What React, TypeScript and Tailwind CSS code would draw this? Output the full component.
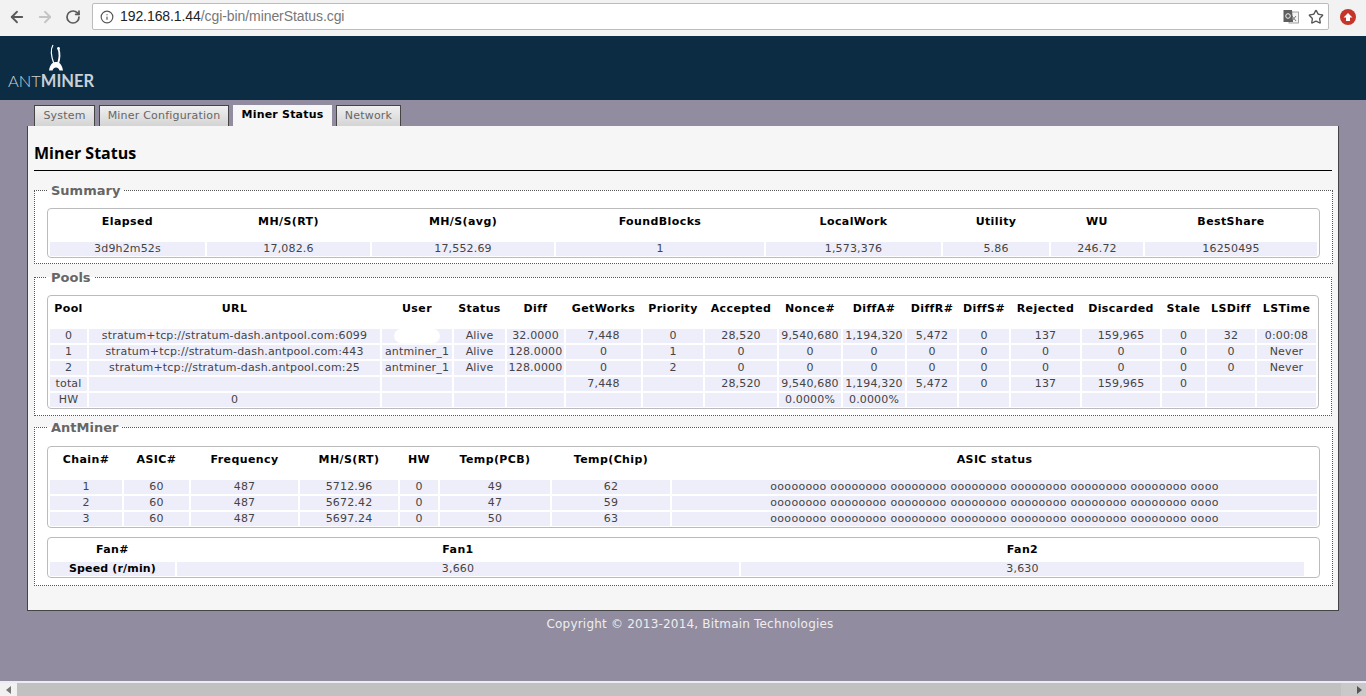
import { ArrowLeft, ArrowRight, Info, RotateCw, Star } from "lucide-react";
import type { ReactNode } from "react";

const summaryHead = ["Elapsed", "MH/S(RT)", "MH/S(avg)", "FoundBlocks", "LocalWork", "Utility", "WU", "BestShare"];
const summaryRows = [["3d9h2m52s", "17,082.6", "17,552.69", "1", "1,573,376", "5.86", "246.72", "16250495"]];

const poolHead = ["Pool", "URL", "User", "Status", "Diff", "GetWorks", "Priority", "Accepted", "Nonce#", "DiffA#", "DiffR#", "DiffS#", "Rejected", "Discarded", "Stale", "LSDiff", "LSTime"];
const poolRows = [
  ["0", "stratum+tcp://stratum-dash.antpool.com:6099", "@hidden", "Alive", "32.0000", "7,448", "0", "28,520", "9,540,680", "1,194,320", "5,472", "0", "137", "159,965", "0", "32", "0:00:08"],
  ["1", "stratum+tcp://stratum-dash.antpool.com:443", "antminer_1", "Alive", "128.0000", "0", "1", "0", "0", "0", "0", "0", "0", "0", "0", "0", "Never"],
  ["2", "stratum+tcp://stratum-dash.antpool.com:25", "antminer_1", "Alive", "128.0000", "0", "2", "0", "0", "0", "0", "0", "0", "0", "0", "0", "Never"],
  ["total", "", "", "", "", "7,448", "", "28,520", "9,540,680", "1,194,320", "5,472", "0", "137", "159,965", "0", "", ""],
  ["HW", "0", "", "", "", "", "", "", "0.0000%", "0.0000%", "", "", "", "", "", "", ""],
];

const chainHead = ["Chain#", "ASIC#", "Frequency", "MH/S(RT)", "HW", "Temp(PCB)", "Temp(Chip)", "ASIC status"];
const asic = "oooooooo oooooooo oooooooo oooooooo oooooooo oooooooo oooooooo oooo";
const chainRows = [
  ["1", "60", "487", "5712.96", "0", "49", "62", asic],
  ["2", "60", "487", "5672.42", "0", "47", "59", asic],
  ["3", "60", "487", "5697.24", "0", "50", "63", asic],
];

function DataTable({ cols, head, rows, headClass = "h-[28px] leading-[20px]", className = "", boldFirst = false }: {
  cols: string;
  head: string[];
  rows: string[][];
  headClass?: string;
  className?: string;
  boldFirst?: boolean;
}) {
  return (
    <div className={`rounded-[4px] border border-[#bbbbbb] bg-white px-[2px] pb-[1px] pt-[3px] ${className}`}>
      <div className={`grid gap-[2px] ${cols}`}>
        {head.map((h) => (
          <div key={h} className={`text-center font-bold tracking-[0.4px] text-black ${headClass}`}>{h}</div>
        ))}
        {rows.map((row, i) =>
          row.map((cell, j) => (
            <div
              key={`${i}-${j}`}
              className={`flex h-[14px] items-center justify-center whitespace-nowrap bg-[#eeeefb] leading-[14px] ${cell === asic ? "tracking-[0.3px]" : "tracking-[0.16px]"} ${boldFirst && j === 0 ? "font-bold tracking-[0.4px] text-black" : ""}`}
            >
              {cell === "@hidden" ? <span className="h-[14px] w-[46px] rounded-full bg-white" /> : cell}
            </div>
          ))
        )}
      </div>
    </div>
  );
}

function Box({ title, className = "", children }: { title: string; className?: string; children: ReactNode }) {
  return (
    <fieldset className={`border border-dotted border-[#555555] bg-white px-[12px] pb-[5px] pt-[10px] ${className}`}>
      <legend className="px-[4px] pt-[2px] text-[13px] font-bold leading-[14px] text-[#666666]">{title}</legend>
      {children}
    </fieldset>
  );
}

function Logo() {
  return (
    <div className="flex h-[64px] w-[110px] flex-col pl-[8px]">
      <svg width="16" height="28" viewBox="0 0 16 28" className="ml-[40px] mt-[8px]">
        <path d="M5 1 C2.500 5 3 12 6 20" stroke="#ffffff" strokeWidth="1.2" fill="none" />
        <path d="M10.500 5 C12 9 11.500 15 10 20" stroke="#ffffff" strokeWidth="1.8" fill="none" />
        <circle cx="10.500" cy="4.500" r="1.400" fill="#ffffff" />
        <path d="M1 26.500 C2 20 5 18 8 18 C11 18 14 20 15 26.500 L11.500 26.500 C11 24.500 9.500 23.500 8 23.500 C6.500 23.500 5 24.500 4.500 26.500 Z" fill="#ffffff" />
      </svg>
      <div className="-mt-[1px] whitespace-nowrap font-['Lato',sans-serif] text-[16.5px] leading-[20px] text-[#c9d0d6]">
        <span className="font-light">ANT</span>
        <span className="font-bold">MINER</span>
      </div>
    </div>
  );
}

function TranslateIcon() {
  return (
    <svg width="16" height="16" viewBox="0 0 16 16">
      <rect x="6" y="3" width="9.500" height="11" fill="#f4f4f4" stroke="#8a8a8a" strokeWidth="0.8" />
      <path d="M9 7 L13 12 M13 7 L9 12" stroke="#777777" strokeWidth="1" />
      <path d="M0.500 1 H9 L10 13 H0.500 Z" fill="#5e5e5e" />
      <circle cx="5" cy="7" r="2.300" fill="none" stroke="#eeeeee" strokeWidth="1" />
    </svg>
  );
}

export default function App() {
  return (
    <div className="flex h-[696px] w-[1366px] flex-col overflow-hidden bg-[#918c9f] font-['DejaVu_Sans',sans-serif] text-[11px] text-[#444444]">
      {/* Browser toolbar */}
      <div className="flex h-[36px] shrink-0 items-center bg-[#f2f2f2] pb-[3px]">
        <ArrowLeft size={18} strokeWidth={2.4} className="ml-[8px] text-[#5a5a5a]" />
        <ArrowRight size={18} strokeWidth={2.4} className="ml-[10px] text-[#c4c4c4]" />
        <RotateCw size={16} strokeWidth={2.6} className="ml-[11px] text-[#5a5a5a]" />
        <div className="ml-[11px] flex h-[27px] w-[1237px] items-center rounded-[2px] border border-[#bcbcbc] bg-white pl-[7px] font-['Liberation_Sans',sans-serif] text-[14px] tracking-[-0.08px]">
          <Info size={14} className="text-[#555555]" />
          <span className="ml-[6px] text-[#222222]">192.168.1.44</span>
          <span className="text-[#777777]">/cgi-bin/minerStatus.cgi</span>
          <div className="ml-auto mr-[4px] flex items-center gap-[9px]">
            <TranslateIcon />
            <Star size={16} strokeWidth={2} className="text-[#555555]" />
          </div>
        </div>
        <div className="ml-[11px] flex h-[16px] w-[16px] items-center justify-center rounded-full bg-[#c5352a]">
          <svg width="10" height="10" viewBox="0 0 10 10">
            <path d="M5 1 L9.500 5.500 H7 V9 H3 V5.500 H0.500 Z" fill="#ffffff" />
          </svg>
        </div>
      </div>

      {/* Header */}
      <div className="h-[64px] shrink-0 bg-[#0c2c43]">
        <Logo />
      </div>

      <div className="flex-1">
        {/* Tabs */}
        <div className="mt-[5px] flex h-[21px] gap-[4px] pl-[34px] text-[11px] tracking-[0.2px]">
          <div className="flex w-[61px] items-center justify-center border border-b-0 border-[#444444] bg-gradient-to-b from-[#f0f0f0] to-[#d4d4d4] text-[#666666]">System</div>
          <div className="flex w-[130px] items-center justify-center border border-b-0 border-[#444444] bg-gradient-to-b from-[#f0f0f0] to-[#d4d4d4] text-[#666666]">Miner Configuration</div>
          <div className="flex w-[99px] items-center justify-center bg-[#f6f6f6] font-bold text-black">Miner Status</div>
          <div className="flex w-[65px] items-center justify-center border border-b-0 border-[#444444] bg-gradient-to-b from-[#f0f0f0] to-[#d4d4d4] text-[#666666]">Network</div>
        </div>

        {/* Panel */}
        <div className="ml-[27px] h-[485px] w-[1312px] border border-t-0 border-[#444444] bg-[#f6f6f6] px-[6px]">
          <h2 className="h-[45px] border-b border-black pt-[15px] font-['Open_Sans',sans-serif] text-[16px] font-bold leading-[24px] text-black">Miner Status</h2>
          <div className="mt-[11px] flex flex-col">
            <Box title="Summary">
              <DataTable
                cols="grid-cols-[155px_163px_182px_208px_175px_106px_92px_172px]"
                head={summaryHead}
                rows={summaryRows}
              />
            </Box>
            <Box title="Pools" className="mt-[5px]">
              <DataTable
                className="mb-[1px]"
                cols="grid-cols-[37px_291px_70px_51px_57px_75px_60px_72px_62px_62px_50px_50px_69px_78px_43px_48px_59px]"
                head={poolHead}
                rows={poolRows}
              />
            </Box>
            <Box title="AntMiner" className="mt-[3px]">
              <DataTable
                className="mt-[1px]"
                cols="grid-cols-[72px_65px_107px_98px_38px_110px_118px_645px]"
                head={chainHead}
                rows={chainRows}
              />
              <DataTable
                className="mb-[2px] mt-[9px]"
                cols="grid-cols-[125px_562px_563px]"
                head={["Fan#", "Fan1", "Fan2"]}
                rows={[["Speed (r/min)", "3,660", "3,630"]]}
                headClass="h-[19px] leading-[18px]"
                boldFirst
              />
            </Box>
          </div>
        </div>

        <div className="mt-[5px] pl-[14px] text-center text-[12px] leading-[16px] tracking-[0.2px] text-[#eeeeee]">Copyright © 2013-2014, Bitmain Technologies</div>
      </div>

      {/* Horizontal scrollbar */}
      <div className="flex h-[15px] shrink-0 border-t-2 border-[#ececf2] bg-[#f1f1f1]">
        <div className="flex w-[17px] items-center justify-center">
          <div className="h-0 w-0 border-y-[4px] border-r-[5px] border-y-transparent border-r-[#777777]" />
        </div>
        <div className="w-[1324px] bg-[#c1c1c1]" />
        <div className="flex flex-1 items-center justify-end bg-[#c9c9c9] pr-[4px]">
          <div className="h-0 w-0 border-y-[4px] border-l-[5px] border-y-transparent border-l-[#555555]" />
        </div>
      </div>
    </div>
  );
}
